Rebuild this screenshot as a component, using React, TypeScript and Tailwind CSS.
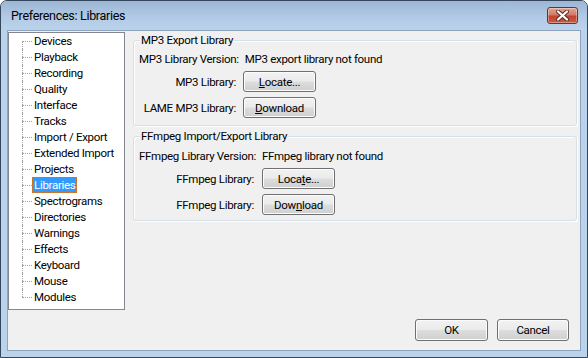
import React from "react";

const FONT = "font-['Roboto','Noto_Sans',sans-serif] text-[11.5px] leading-[16px] tracking-[-0.3px] text-black";

const treeItems = [
  "Devices",
  "Playback",
  "Recording",
  "Quality",
  "Interface",
  "Tracks",
  "Import / Export",
  "Extended Import",
  "Projects",
  "Libraries",
  "Spectrograms",
  "Directories",
  "Warnings",
  "Effects",
  "Keyboard",
  "Mouse",
  "Modules",
];

function Btn({ children, w = "w-[73px]", h = "h-[21px]" }: { children: React.ReactNode; w?: string; h?: string }) {
  return (
    <div
      className={`${w} ${h} shrink-0 flex items-center justify-center rounded-[3px] border border-[#707070] bg-[linear-gradient(#f2f2f2_0%,#ebebeb_48%,#dddddd_52%,#cfcfcf_100%)] shadow-[inset_0_0_0_1px_#fcfcfc]`}
    >
      <span>{children}</span>
    </div>
  );
}

function Group({
  title,
  h,
  mt,
  pt,
  children,
}: {
  title: string;
  h: string;
  mt: string;
  pt: string;
  children: React.ReactNode;
}) {
  return (
    <div className={`relative ${h} ${mt} ${pt} pl-[5px] rounded-[3px] border border-[#d5dfe5] shadow-[inset_1px_1px_0_#ffffff,1px_1px_0_#ffffff]`}>
      <span className="absolute -top-[9px] left-[6px] px-[1px] bg-[#f0f0f0] whitespace-nowrap">{title}</span>
      {children}
    </div>
  );
}

export default function App() {
  return (
    <div className={`w-[588px] h-[358px] flex flex-col overflow-hidden rounded-t-[7px] border border-[#34465c] bg-[#bad2ea] ${FONT}`}>
      {/* Title bar */}
      <div className="h-[29px] shrink-0 flex items-center justify-between pl-[10px] pr-[9px] bg-[linear-gradient(#9cb6d4,#b3cbe6_60%,#bcd3eb)]">
        <span className="text-[12.5px] text-black whitespace-nowrap">Preferences: Libraries</span>
        <div className="w-[31px] h-[17px] mt-[-1px] flex items-center justify-center rounded-[3px] border border-[#7a2d22] bg-[linear-gradient(#e5a493_0%,#d47a66_45%,#c2432f_55%,#c95a43_100%)] shadow-[inset_0_0_0_1px_rgba(255,255,255,0.35)]">
          <svg width="13" height="11" viewBox="0 0 13 11">
            <path d="M2 1.5 L11 9.5 M11 1.5 L2 9.5" stroke="#5a2a22" strokeWidth="4" strokeLinecap="round" />
            <path d="M2 1.5 L11 9.5 M11 1.5 L2 9.5" stroke="#ffffff" strokeWidth="2.2" strokeLinecap="round" />
          </svg>
        </div>
      </div>

      {/* Client area */}
      <div className="mx-[6px] mb-[6px] flex-1 flex flex-col border border-[#8da4bf] bg-[#f0f0f0]">
        <div className="flex items-start">
          {/* Tree */}
          <div className="mt-[1px] w-[117px] h-[278px] shrink-0 border border-[#828790] bg-white">
            <div className="pl-[13px] flex flex-col">
              {treeItems.map((item, i) => {
                const first = i === 0;
                const last = i === treeItems.length - 1;
                const selected = item === "Libraries";
                return (
                  <div key={item} className="h-[16px] flex items-stretch">
                    <div className="w-[10px] shrink-0 flex flex-col">
                      <div className={`h-[8px] ${first ? "" : "border-l border-dotted border-[#a0a0a0]"}`} />
                      <div
                        className={`h-[8px] border-t border-dotted border-[#a0a0a0] ${last ? "" : "border-l"}`}
                      />
                    </div>
                    {selected ? (
                      <span className="h-[16px] px-[1px] bg-[#3399ff] text-white border border-dotted border-[#c8762a] leading-[14px] whitespace-nowrap">
                        {item}
                      </span>
                    ) : (
                      <span className="pl-[2px] whitespace-nowrap">{item}</span>
                    )}
                  </div>
                );
              })}
            </div>
          </div>

          {/* Right panel */}
          <div className="ml-[8px] mt-[9px] w-[444px] flex flex-col">
            <Group title="MP3 Export Library" h="h-[86px]" mt="mt-0" pt="pt-[10px]">
              <div className="flex items-center whitespace-nowrap">
                <span className="min-w-[97px] flex justify-end shrink-0">MP3 Library Version:</span>
                <span className="ml-[6px]">MP3 export library not found</span>
              </div>
              <div className="mt-[4px] flex items-center whitespace-nowrap">
                <span className="w-[97px] flex justify-end shrink-0">MP3 Library:</span>
                <div className="ml-[7px]">
                  <Btn>
                    <u>L</u>ocate...
                  </Btn>
                </div>
              </div>
              <div className="mt-[5px] flex items-center whitespace-nowrap">
                <span className="w-[97px] flex justify-end shrink-0">LAME MP3 Library:</span>
                <div className="ml-[7px]">
                  <Btn>
                    <u>D</u>ownload
                  </Btn>
                </div>
              </div>
            </Group>

            <Group title="FFmpeg Import/Export Library" h="h-[85px]" mt="mt-[10px]" pt="pt-[11px]">
              <div className="flex items-center whitespace-nowrap">
                <span className="min-w-[112px] flex justify-end shrink-0">FFmpeg Library Version:</span>
                <span className="ml-[6px]">FFmpeg library not found</span>
              </div>
              <div className="mt-[4px] flex items-center whitespace-nowrap">
                <span className="w-[115px] flex justify-end shrink-0">FFmpeg Library:</span>
                <div className="ml-[8px]">
                  <Btn>
                    Loca<u>t</u>e...
                  </Btn>
                </div>
              </div>
              <div className="mt-[5px] flex items-center whitespace-nowrap">
                <span className="w-[115px] flex justify-end shrink-0">FFmpeg Library:</span>
                <div className="ml-[8px]">
                  <Btn>
                    Dow<u>n</u>load
                  </Btn>
                </div>
              </div>
            </Group>
          </div>
        </div>

        {/* Bottom buttons */}
        <div className="mt-[9px] pr-[11px] flex justify-end gap-[9px]">
          <Btn h="h-[22px]">OK</Btn>
          <Btn h="h-[22px]" w="w-[72px]">Cancel</Btn>
        </div>
      </div>
    </div>
  );
}
